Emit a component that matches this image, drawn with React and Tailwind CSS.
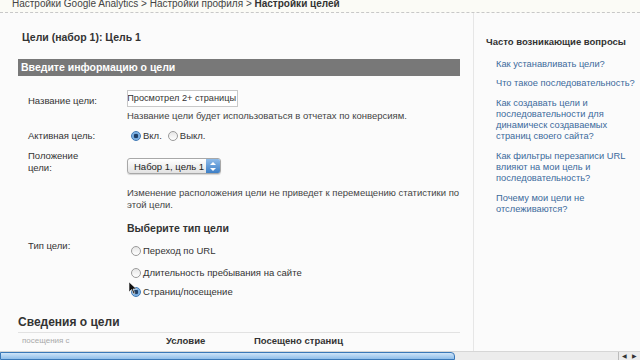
import React from "react";

const FAQ = [
  ["Как устанавливать цели?"],
  ["Что такое последовательность?"],
  ["Как создавать цели и", "последовательности для", "динамическ создаваемых", "страниц своего сайта?"],
  ["Как фильтры перезаписи URL", "влияют на мои цель и", "последовательность?"],
  ["Почему мои цели не", "отслеживаются?"],
];

function Radio({ checked }) {
  return (
    <span
      className={`inline-block h-[10px] w-[10px] rounded-full border ${
        checked
          ? "border-[#3d78b5] bg-[radial-gradient(circle,#1f3f66_0_2px,#6fa6dc_2.5px,#a9cdf0_100%)]"
          : "border-[#9a9a9a] bg-[linear-gradient(#e6e6e6,#ffffff)]"
      }`}
    />
  );
}

export default function App() {
  return (
    <div className="relative h-[360px] w-[640px] overflow-hidden bg-[#fbfbfb] text-[#333] font-['Liberation_Sans',Arial,sans-serif]">
      {/* хлебные крошки */}
      <div className="flow-root h-[13px] border-b border-dashed border-[#c8c8c8] bg-[#fbfbf6] pl-[12px]">
        <div className="-mt-[3px] text-[10px] leading-[13px] text-[#444]">
          Настройки Google Analytics &gt; Настройки профиля &gt;{" "}
          <b className="text-[#333]">Настройки целей</b>
        </div>
      </div>

      <div className="flex h-[347px]">
        {/* левая колонка */}
        <div className="w-[473px] pl-[18px] pr-[13px]">
          <div className="mt-[17px] pl-[4px] text-[10.5px] font-bold leading-[14px]">
            Цели (набор 1): Цель 1
          </div>

          <div className="mt-[15px] h-[17px] bg-[#787878] pl-[3px] text-[10.5px] font-bold leading-[17px] text-white">
            Введите информацию о цели
          </div>

          <div className="grid grid-cols-[99px_1fr] pl-[10px] text-[9.5px] leading-[11px]">
            {/* название */}
            <div className="mt-[19px]">Название цели:</div>
            <div className="mt-[14px]">
              <div className="flex h-[17px] w-[111px] justify-end overflow-hidden border border-[#c9c9c9] bg-white pr-[1px] text-[9.2px] leading-[15px] whitespace-nowrap">
                <span>Просмотрел 2+ страницы</span>
              </div>
              <div className="mt-[3px] leading-[12px] text-[#444]">
                Название цели будет использоваться в отчетах по конверсиям.
              </div>
            </div>

            {/* активная */}
            <div className="mt-[8px]">Активная цель:</div>
            <div className="mt-[8px] flex items-center gap-[2px] pl-[4px] text-[#333]">
              <Radio checked />
              <span className="mr-[4px]">Вкл.</span>
              <Radio />
              <span>Выкл.</span>
            </div>

            {/* положение */}
            <div className="mt-[9px] leading-[12px]">
              Положение
              <br />
              цели:
            </div>
            <div className="mt-[17px]">
              <div className="flex h-[16px] w-[94px] items-center rounded-[3px] border border-[#a8a8a8] bg-[linear-gradient(#ffffff,#e2e2e2)] pl-[6px] shadow-[0_1px_1px_rgba(0,0,0,0.15)]">
                <span className="flex-1 text-[9.5px] text-[#222]">Набор 1, цель 1</span>
                <span className="flex h-[14px] w-[14px] flex-col items-center justify-center rounded-r-[2px] bg-[linear-gradient(#8ebbe9,#3d7fc6)]">
                  <svg width="6" height="9" viewBox="0 0 6 9">
                    <path d="M3 0 L6 3 H0 Z" fill="#fff" />
                    <path d="M3 9 L6 6 H0 Z" fill="#fff" />
                  </svg>
                </span>
              </div>
            </div>

            {/* пояснение */}
            <div />
            <div className="mt-[13px] leading-[11.5px] text-[#444]">
              Изменение расположения цели не приведет к перемещению статистики по
              <br />
              этой цели.
            </div>

            {/* тип цели */}
            <div />
            <div className="mt-[11px] text-[10.5px] font-bold leading-[14px]">Выберите тип цели</div>

            <div className="mt-[5px]">Тип цели:</div>
            <div className="mt-[10px] flex flex-col gap-[11px] pl-[4px]">
              <div className="flex items-center gap-[2px]">
                <Radio />
                <span>Переход по URL</span>
              </div>
              <div className="flex items-center gap-[2px]">
                <Radio />
                <span>Длительность пребывания на сайте</span>
              </div>
              <div className="-mt-[3px] flex items-center gap-[2px]">
                <Radio checked />
                <span>Страниц/посещение</span>
              </div>
            </div>
          </div>

          {/* сведения */}
          <div className="mt-[18px] border-b border-[#e2e2e2] pb-[2px] text-[12px] font-bold leading-[15px] text-[#333]">
            Сведения о цели
          </div>
          <div className="mt-[2px] flex items-center text-[9.5px] leading-[12px]">
            <span className="w-[148px] pl-[4px] text-[8px] text-[#aaa]">посещения с</span>
            <span className="w-[88px] font-bold">Условие</span>
            <span className="font-bold">Посещено страниц</span>
          </div>
        </div>

        {/* правая колонка */}
        <div className="flex-1 border-l border-[#e6e6e6] pl-[12px]">
          <div className="mt-[23px] text-[9.5px] font-bold leading-[12px]">Часто возникающие вопросы</div>
          <div className="mt-[11px] flex flex-col gap-[8px] pl-[10px] text-[9.3px] leading-[11.3px] text-[#3b6a9c]">
            {FAQ.map((lines, i) => (
              <div key={i}>
                {lines.map((l, j) => (
                  <div key={j}>{l}</div>
                ))}
              </div>
            ))}
          </div>
        </div>
      </div>

      {/* курсор */}
      <svg className="absolute left-[129px] top-[282px]" width="9" height="13" viewBox="0 0 9 13">
        <path d="M0 0 L0 10 L2.5 7.5 L4.5 12 L6 11.3 L4 7 L7.5 7 Z" fill="#111" stroke="#fff" strokeWidth="0.6" />
      </svg>

      {/* нижняя полоса */}
      <div className="absolute bottom-0 left-0 flex h-[9px] w-full items-stretch border-t border-[#d6d6d6] bg-[#ececec]">
        <div className="w-[455px] rounded-tr-[4px] border border-[#3a78b8] bg-[linear-gradient(#cfe4f8,#8fbde9)]" />
        <div className="flex-1" />
        <div className="flex w-[22px] items-center justify-around border-l border-[#bbb] text-[6px] text-[#333]">
          <span>◀</span>
          <span>▶</span>
        </div>
      </div>
    </div>
  );
}
